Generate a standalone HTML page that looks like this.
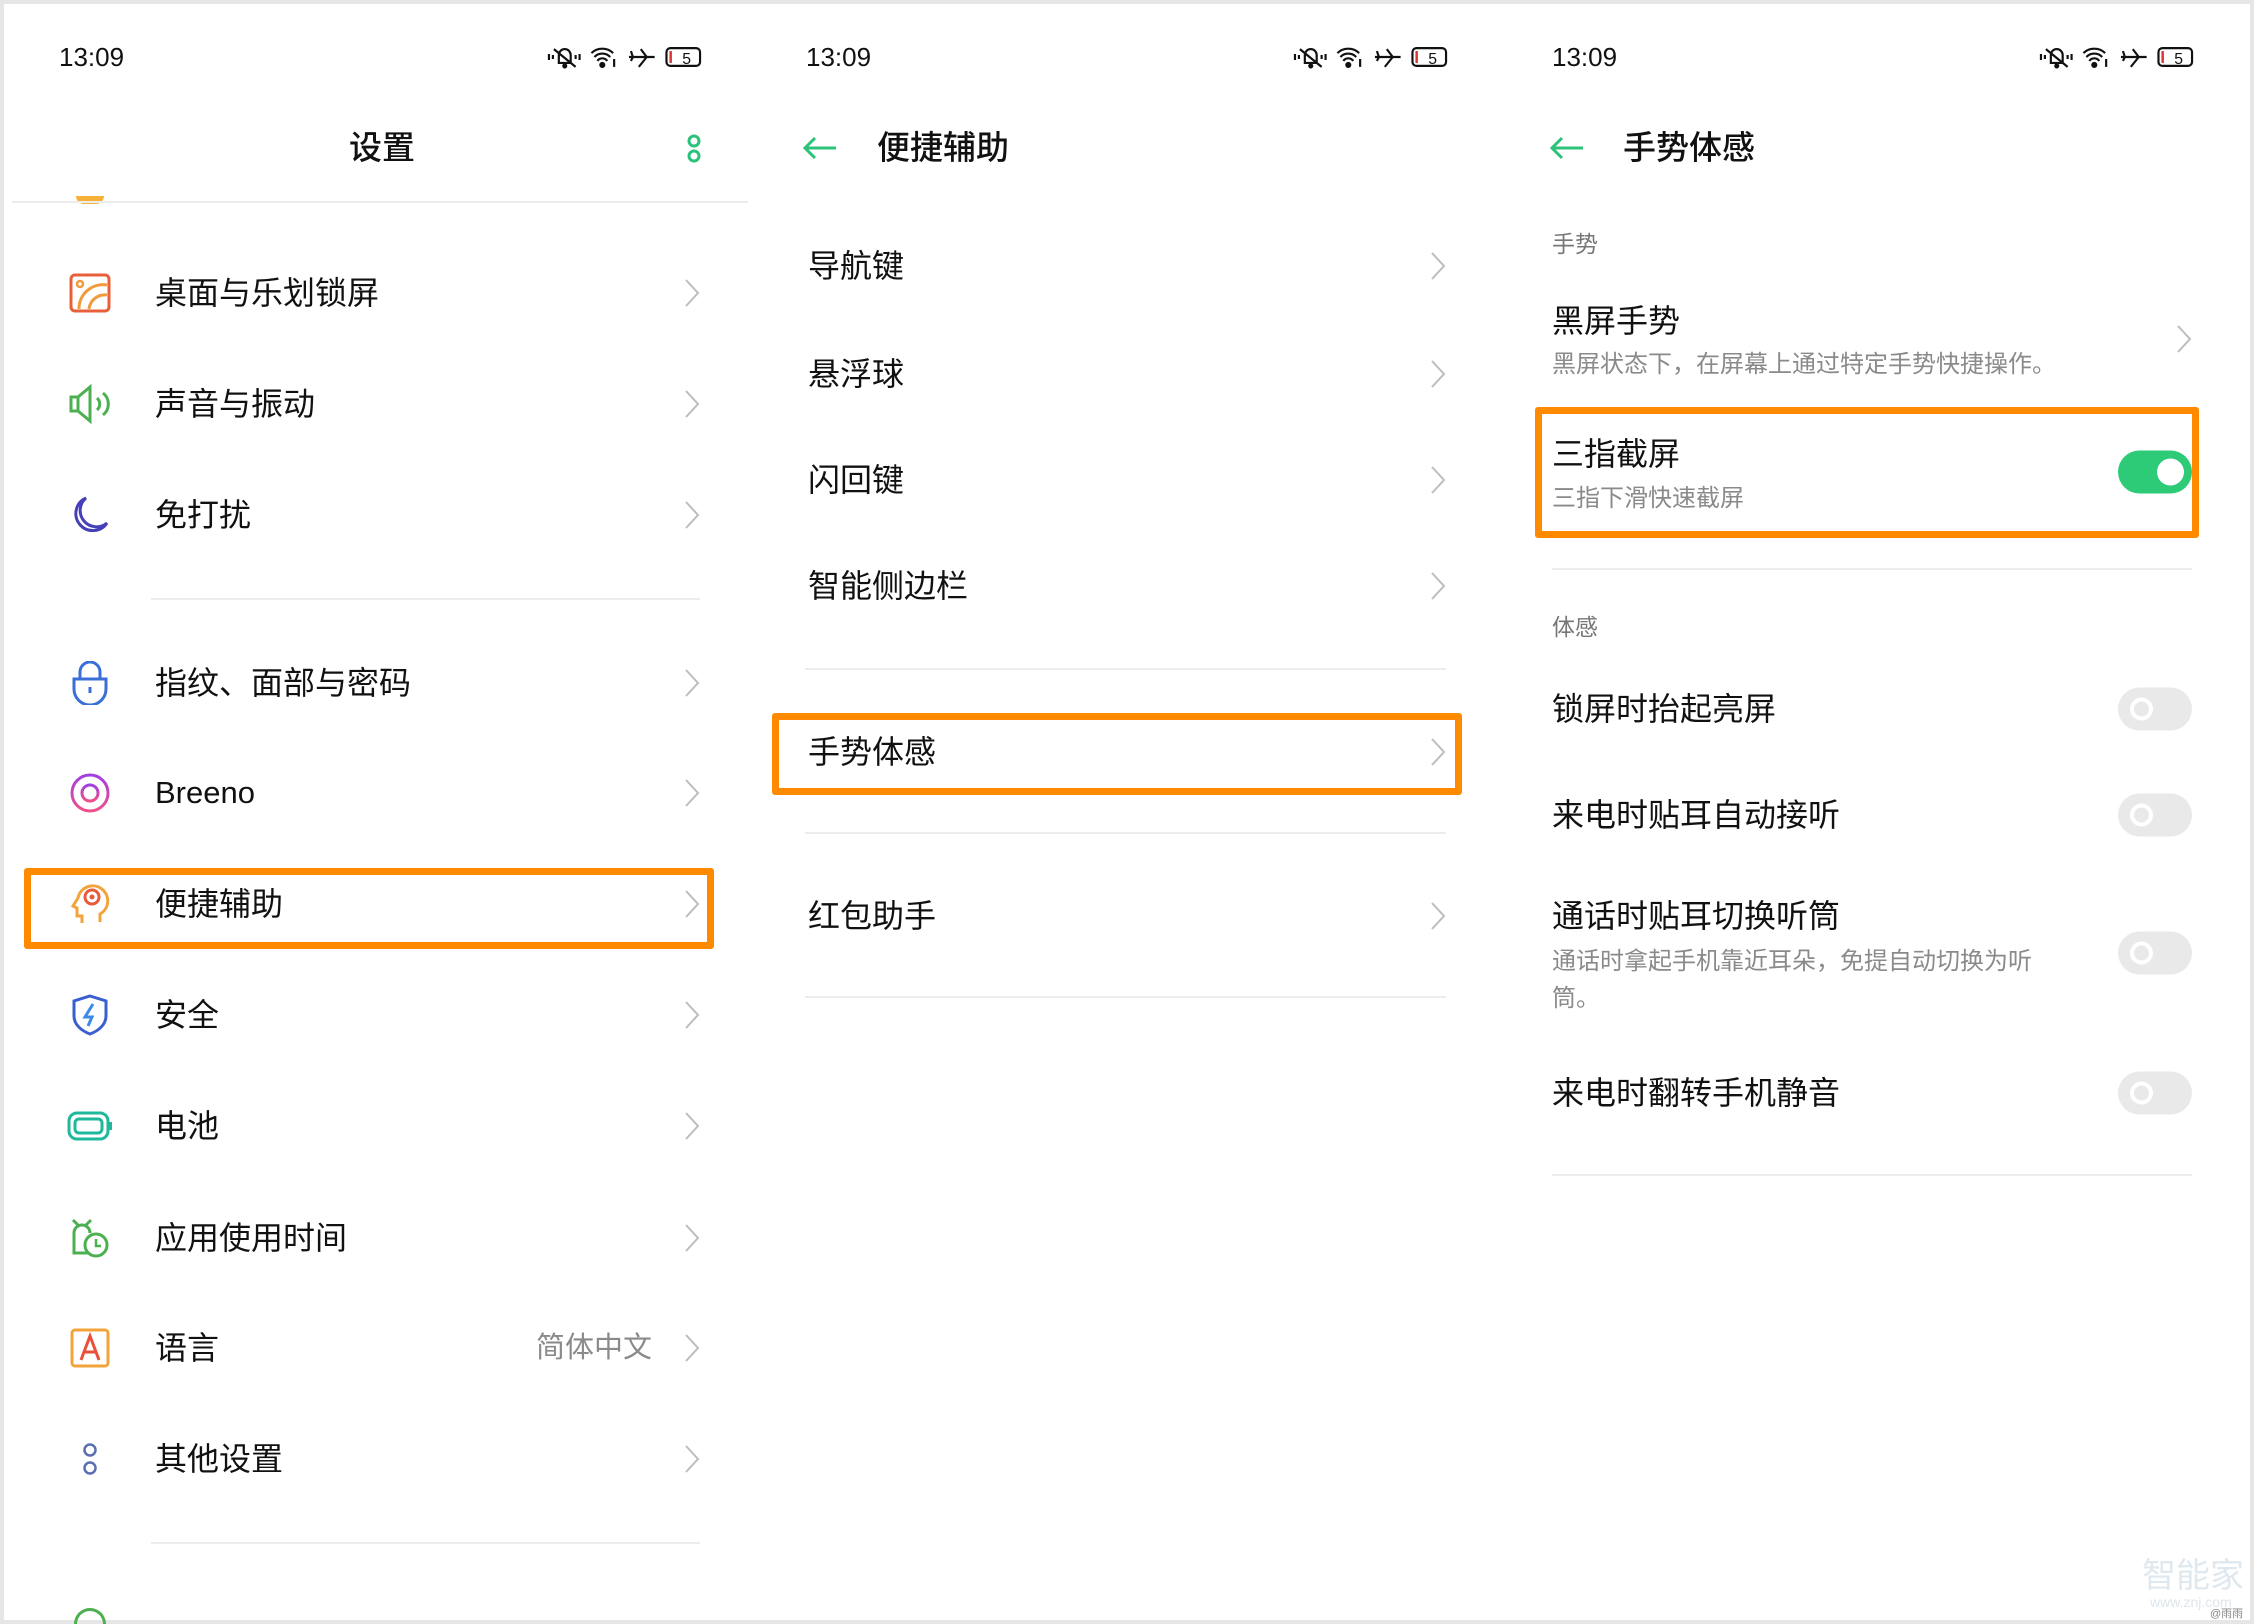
<!DOCTYPE html>
<html><head><meta charset="utf-8">
<style>
*{margin:0;padding:0;box-sizing:border-box}
body{width:2254px;height:1624px;background:#fff;position:relative;overflow:hidden;font-family:"Liberation Sans","Noto Sans CJK SC",sans-serif;color:#111}
.a{position:absolute;white-space:nowrap}
.t{font-size:32px;line-height:40px;transform:translateY(-50%)}
.ttl{font-size:33px;font-weight:500;line-height:40px;transform:translateY(-50%)}
.sub{font-size:24px;color:#8a8a8a;line-height:30px;transform:translateY(-50%)}
.sec{font-size:23px;color:#777;line-height:30px;transform:translateY(-50%)}
.time{font-size:26px;line-height:30px;transform:translateY(-50%);color:#111}
.line{position:absolute;height:2px;background:#ececec}
.box{position:absolute;border:7px solid #ff8a00;border-radius:3px}
.chev{position:absolute;width:16px;height:30px;transform:translateY(-50%)}
.tg{position:absolute;width:74px;height:43px;border-radius:22px;background:#e9e9e9;transform:translateY(-50%)}
.tg::after{content:"";position:absolute;left:12px;top:10px;width:23px;height:23px;border-radius:50%;border:4px solid #fff;box-sizing:border-box}
.tg.on{background:#2dca78}
.tg.on::after{left:auto;right:8px;top:8px;width:27px;height:27px;background:#fff;border:none}
.ic{position:absolute;transform:translate(-50%,-50%)}
</style></head><body>
<div style="position:absolute;left:0;top:0;width:2254px;height:4px;background:#e6e6e6"></div>
<div style="position:absolute;left:0;top:0;width:4px;height:1624px;background:#e6e6e6"></div>
<div style="position:absolute;left:0;bottom:0;width:2254px;height:4px;background:#e6e6e6"></div>
<div style="position:absolute;right:0;top:0;width:4px;height:1624px;background:#e6e6e6"></div>

<svg width="0" height="0" style="position:absolute"><defs>
<symbol id="chev" viewBox="0 0 16 30"><path d="M2 2 L14 15 L2 28" fill="none" stroke="#bdbdbd" stroke-width="2"/></symbol>
<symbol id="stat" viewBox="0 0 160 24">
<g fill="none" stroke="#111" stroke-width="2.2">
<path d="M13 18 V10 a6 6 0 0 1 12 0 V18 Z M8 4 L30 22"/><path d="M3 9v6M34 9v6M7 10v4M30 10v4"/><circle cx="19" cy="21" r="1.5" fill="#111"/>
<path d="M46 8 a16 16 0 0 1 22 0 M49 12 a11 11 0 0 1 16 0 M52 16 a6 6 0 0 1 10 0"/><circle cx="57" cy="20" r="2" fill="#111"/><path d="M69 14v8"/>
<path d="M84 12 H110 M96 4 L102 12 L94 22 M86 6 L88 12 L86 16"/>
<rect x="122" y="3" width="34" height="18" rx="4"/>
</g><rect x="125" y="6" width="2.5" height="12" fill="#d33"/><text x="138" y="19" font-size="16" font-family="Liberation Sans" fill="#111">5</text>
</symbol>
<symbol id="back" viewBox="0 0 36 24"><path d="M34 12 H3 M13 2 L3 12 L13 22" fill="none" stroke="#2dc27a" stroke-width="3"/></symbol>
</defs></svg>

<!-- ========== PANEL 1 ========== -->
<div class="a time" style="left:59px;top:57px">13:09</div>
<svg class="a" style="left:546px;top:45px" width="158" height="24"><use href="#stat"/></svg>
<div class="a ttl" style="left:349px;top:148px">设置</div>
<svg class="a" style="left:686px;top:134px" width="16" height="30"><circle cx="8" cy="7" r="5" fill="none" stroke="#2dc27a" stroke-width="3"/><circle cx="8" cy="22" r="5" fill="none" stroke="#2dc27a" stroke-width="3"/></svg>
<div style="position:absolute;left:76px;top:196px;width:28px;height:8px;border-radius:0 0 14px 14px;background:#f5b13a"></div>
<div class="line" style="left:12px;top:201px;width:736px"></div>

<svg class="ic" style="left:90px;top:293px" width="42" height="40" viewBox="0 0 42 40"><rect x="2" y="2" width="38" height="36" rx="4" fill="none" stroke="#e8603a" stroke-width="3"/><circle cx="11" cy="11" r="3" fill="none" stroke="#f09a3a" stroke-width="2.5"/><path d="M10 36 A24 24 0 0 1 38 12 M20 36 A16 16 0 0 1 38 22" fill="none" stroke="#f09a3a" stroke-width="3"/></svg>
<div class="a t" style="left:155px;top:293px">桌面与乐划锁屏</div>
<svg class="chev" style="left:684px;top:293px"><use href="#chev"/></svg>

<svg class="ic" style="left:90px;top:404px" width="44" height="40" viewBox="0 0 44 40"><path d="M3 13 H10 L22 3 V37 L10 27 H3 Z M10 13 V27" fill="none" stroke="#4caf50" stroke-width="3"/><path d="M29 14 a8 8 0 0 1 0 12 M35 9 a14 14 0 0 1 0 22" fill="none" stroke="#4caf50" stroke-width="3"/></svg>
<div class="a t" style="left:155px;top:404px">声音与振动</div>
<svg class="chev" style="left:684px;top:404px"><use href="#chev"/></svg>

<svg class="ic" style="left:90px;top:515px" width="40" height="40" viewBox="0 0 40 40"><path d="M16 3 A17 17 0 1 0 37 28 A14 14 0 0 1 16 3 Z" fill="none" stroke="#4640b8" stroke-width="3"/></svg>
<div class="a t" style="left:155px;top:515px">免打扰</div>
<svg class="chev" style="left:684px;top:515px"><use href="#chev"/></svg>

<div class="line" style="left:151px;top:598px;width:549px"></div>

<svg class="ic" style="left:90px;top:683px" width="38" height="44" viewBox="0 0 38 44"><path d="M9 18 V11 a10 10 0 0 1 20 0 V18" fill="none" stroke="#3a6fd8" stroke-width="3"/><path d="M3 18 H35 V28 a16 16 0 0 1 -32 0 Z" fill="none" stroke="#3a6fd8" stroke-width="3"/><path d="M19 26 V32" stroke="#3a6fd8" stroke-width="3"/></svg>
<div class="a t" style="left:155px;top:683px">指纹、面部与密码</div>
<svg class="chev" style="left:684px;top:683px"><use href="#chev"/></svg>

<svg class="ic" style="left:90px;top:793px" width="42" height="42" viewBox="0 0 42 42"><defs><linearGradient id="bg" x1="0" y1="0" x2="0" y2="1"><stop offset="0" stop-color="#a040e0"/><stop offset="1" stop-color="#f0508a"/></linearGradient></defs><circle cx="21" cy="21" r="18" fill="none" stroke="url(#bg)" stroke-width="3"/><circle cx="21" cy="21" r="8" fill="none" stroke="url(#bg)" stroke-width="3"/></svg>
<div class="a t" style="left:155px;top:793px;font-size:31px">Breeno</div>
<svg class="chev" style="left:684px;top:793px"><use href="#chev"/></svg>

<svg class="ic" style="left:90px;top:904px" width="40" height="44" viewBox="0 0 40 44"><path d="M12 41 V34 H7 V26 L3 24 L8 16 a15 15 0 1 1 22 16 V40" fill="none" stroke="#f2a33a" stroke-width="3"/><circle cx="22" cy="15" r="7" fill="none" stroke="#e85a3a" stroke-width="3"/><circle cx="22" cy="15" r="2.5" fill="#e85a3a"/></svg>
<div class="a t" style="left:155px;top:904px">便捷辅助</div>
<svg class="chev" style="left:684px;top:904px"><use href="#chev"/></svg>
<div class="box" style="left:24px;top:868px;width:690px;height:81px"></div>

<svg class="ic" style="left:90px;top:1015px" width="38" height="42" viewBox="0 0 38 42"><path d="M19 2 L35 7 V22 C35 31 27 37 19 40 C11 37 3 31 3 22 V7 Z" fill="none" stroke="#3a60d0" stroke-width="3"/><path d="M22 10 L14 23 H21 L17 32" fill="none" stroke="#3a8ae8" stroke-width="3"/></svg>
<div class="a t" style="left:155px;top:1015px">安全</div>
<svg class="chev" style="left:684px;top:1015px"><use href="#chev"/></svg>

<svg class="ic" style="left:90px;top:1126px" width="46" height="30" viewBox="0 0 46 30"><rect x="2" y="2" width="39" height="26" rx="8" fill="none" stroke="#1fb89a" stroke-width="3"/><rect x="8" y="8" width="27" height="14" rx="4" fill="none" stroke="#1fb89a" stroke-width="3"/><rect x="41" y="11" width="4" height="8" fill="#1fb89a"/></svg>
<div class="a t" style="left:155px;top:1126px">电池</div>
<svg class="chev" style="left:684px;top:1126px"><use href="#chev"/></svg>

<svg class="ic" style="left:90px;top:1238px" width="42" height="42" viewBox="0 0 42 42"><path d="M4 3 L9 8 M22 3 L17 8 M20 36 H5 V16 a8 8 0 0 1 16 0" fill="none" stroke="#4caf50" stroke-width="3"/><circle cx="27" cy="28" r="11" fill="none" stroke="#4caf50" stroke-width="3"/><path d="M27 22 V29 H32" fill="none" stroke="#4caf50" stroke-width="2.5"/></svg>
<div class="a t" style="left:155px;top:1238px">应用使用时间</div>
<svg class="chev" style="left:684px;top:1238px"><use href="#chev"/></svg>

<svg class="ic" style="left:90px;top:1348px" width="40" height="40" viewBox="0 0 40 40"><rect x="2" y="2" width="36" height="36" rx="3" fill="none" stroke="#f2a33a" stroke-width="3"/><path d="M11 32 L20 8 L29 32 M14 24 H26" fill="none" stroke="#e8503a" stroke-width="3"/></svg>
<div class="a t" style="left:155px;top:1348px">语言</div>
<div class="a t" style="left:536px;top:1348px;color:#8a8a8a;font-size:29px">简体中文</div>
<svg class="chev" style="left:684px;top:1348px"><use href="#chev"/></svg>

<svg class="ic" style="left:90px;top:1459px" width="16" height="34" viewBox="0 0 16 34"><circle cx="8" cy="8" r="5.5" fill="none" stroke="#5a6fb0" stroke-width="2.5"/><circle cx="8" cy="26" r="5.5" fill="none" stroke="#5a6fb0" stroke-width="2.5"/></svg>
<div class="a t" style="left:155px;top:1459px">其他设置</div>
<svg class="chev" style="left:684px;top:1459px"><use href="#chev"/></svg>

<div class="line" style="left:151px;top:1542px;width:549px"></div>
<div style="position:absolute;left:74px;top:1608px;width:32px;height:16px;border-radius:16px 16px 0 0;border:3px solid #4caf50;border-bottom:none"></div>

<!-- ========== PANEL 2 ========== -->
<div class="a time" style="left:806px;top:57px">13:09</div>
<svg class="a" style="left:1292px;top:45px" width="158" height="24"><use href="#stat"/></svg>
<svg class="a" style="left:802px;top:136px" width="36" height="24"><use href="#back"/></svg>
<div class="a ttl" style="left:877px;top:148px">便捷辅助</div>

<div class="a t" style="left:808px;top:266px">导航键</div>
<svg class="chev" style="left:1430px;top:266px"><use href="#chev"/></svg>
<div class="a t" style="left:808px;top:374px">悬浮球</div>
<svg class="chev" style="left:1430px;top:374px"><use href="#chev"/></svg>
<div class="a t" style="left:808px;top:480px">闪回键</div>
<svg class="chev" style="left:1430px;top:480px"><use href="#chev"/></svg>
<div class="a t" style="left:808px;top:586px">智能侧边栏</div>
<svg class="chev" style="left:1430px;top:586px"><use href="#chev"/></svg>
<div class="line" style="left:805px;top:668px;width:641px"></div>
<div class="a t" style="left:808px;top:752px">手势体感</div>
<svg class="chev" style="left:1430px;top:752px"><use href="#chev"/></svg>
<div class="box" style="left:772px;top:713px;width:690px;height:82px"></div>
<div class="line" style="left:805px;top:832px;width:641px"></div>
<div class="a t" style="left:808px;top:916px">红包助手</div>
<svg class="chev" style="left:1430px;top:916px"><use href="#chev"/></svg>
<div class="line" style="left:805px;top:996px;width:641px"></div>

<!-- ========== PANEL 3 ========== -->
<div class="a time" style="left:1552px;top:57px">13:09</div>
<svg class="a" style="left:2038px;top:45px" width="158" height="24"><use href="#stat"/></svg>
<svg class="a" style="left:1549px;top:136px" width="36" height="24"><use href="#back"/></svg>
<div class="a ttl" style="left:1623px;top:148px">手势体感</div>

<div class="a sec" style="left:1552px;top:244px">手势</div>
<div class="a t" style="left:1552px;top:321px">黑屏手势</div>
<div class="a sub" style="left:1552px;top:365px">黑屏状态下，在屏幕上通过特定手势快捷操作。</div>
<svg class="chev" style="left:2176px;top:339px"><use href="#chev"/></svg>

<div class="a t" style="left:1552px;top:454px">三指截屏</div>
<div class="a sub" style="left:1552px;top:499px">三指下滑快速截屏</div>
<div class="tg on" style="left:2118px;top:472px"></div>
<div class="box" style="left:1535px;top:407px;width:664px;height:131px"></div>
<div class="line" style="left:1552px;top:568px;width:640px"></div>

<div class="a sec" style="left:1552px;top:627px">体感</div>
<div class="a t" style="left:1552px;top:709px">锁屏时抬起亮屏</div>
<div class="tg" style="left:2118px;top:709px"></div>
<div class="a t" style="left:1552px;top:815px">来电时贴耳自动接听</div>
<div class="tg" style="left:2118px;top:815px"></div>
<div class="a t" style="left:1552px;top:916px">通话时贴耳切换听筒</div>
<div class="a sub" style="left:1552px;top:962px">通话时拿起手机靠近耳朵，免提自动切换为听</div>
<div class="a sub" style="left:1552px;top:999px">筒。</div>
<div class="tg" style="left:2118px;top:953px"></div>
<div class="a t" style="left:1552px;top:1093px">来电时翻转手机静音</div>
<div class="tg" style="left:2118px;top:1093px"></div>
<div class="line" style="left:1552px;top:1174px;width:640px"></div>

<div class="a" style="left:2142px;top:1558px;font-size:34px;color:#dfe8ee;line-height:36px">智能家</div>
<div class="a" style="left:2150px;top:1594px;font-size:14px;color:#dde6ec;line-height:16px">www.znj.com</div>
<div class="a" style="left:2210px;top:1608px;font-size:11px;color:#888;line-height:12px">@雨雨</div>
</body></html>
